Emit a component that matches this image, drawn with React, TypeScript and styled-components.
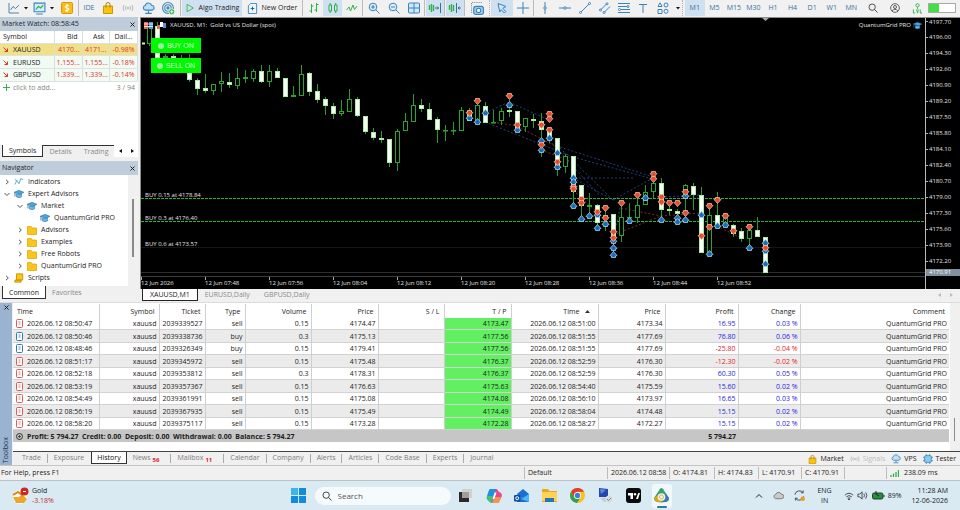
import React from "react";
import styled, { createGlobalStyle, css } from "styled-components";

const Global = createGlobalStyle`
  *, *::before, *::after { box-sizing: border-box; }
  html, body { margin: 0; padding: 0; background: #f0f0f0; }
  body { font: 7px/12px "Open Sans", "Noto Sans", sans-serif; color: #1c1c1c; overflow: hidden; }
  button { font: inherit; color: inherit; background: none; border: 0; padding: 0; margin: 0; cursor: default; white-space: nowrap; }
  svg { display: block; flex: none; }
`;

const Screen = styled.div`
  display: flex;
  flex-direction: column;
  min-height: 100vh;
`;

/* ---------- toolbar ---------- */

const Toolbar = styled.header`
  display: flex;
  align-items: center;
  height: 17px;
  padding: 0 4px 1px 6px;
  background: #f1f1f1;
  overflow: hidden;
`;

const Tool = styled.button<{ $w?: number; $on?: boolean; $wide?: boolean }>`
  display: flex;
  flex: none;
  align-items: center;
  justify-content: center;
  gap: 4px;
  width: ${(p) => p.$w ?? 20}px;
  height: 16px;
  color: ${(p) => (p.$wide ? "#1c1c1c" : "#34719f")};
  background: ${(p) => (p.$on ? "#cfe0f1" : "transparent")};
`;

const Divider = styled.i<{ $dotted?: boolean }>`
  flex: none;
  width: 1px;
  height: 16px;
  margin: 0 1px 0 0;
  border-left: 1px ${(p) => (p.$dotted ? "dotted #b5b5b5" : "solid #bdbdbd")};
`;

const Frames = styled.div`
  display: grid;
  grid-template-columns: repeat(9, 1fr);
  width: 176px;
  margin-left: 1px;
`;

const FrameButton = styled(Tool)`
  width: auto;
`;

const ToolbarEnd = styled.div`
  display: flex;
  align-items: center;
  margin-left: auto;
`;

const Level = styled.div`
  width: 28px;
  height: 10px;
  border: 1px solid #a9a9a9;
  background: linear-gradient(90deg, #3ee043 40%, #fff 40%);
`;

type IconProps = { size?: number; color?: string; children: React.ReactNode; box?: number; sw?: number };
const Icon = ({ size = 12, color = "#3b83bd", children, box = 12, sw = 1 }: IconProps) => (
  <svg width={size} height={size} viewBox={`0 0 ${box} ${box}`} fill="none" stroke={color} strokeWidth={sw} aria-hidden="true">
    {children}
  </svg>
);

const Caret = () => (
  <svg width="4" height="3" viewBox="0 0 4 3" aria-hidden="true"><path d="M0 0h4L2 2.6z" fill="#111" /></svg>
);

const GREEN = "#2eb34a";

const ShiftIcon = ({ back }: { back?: boolean }) => (
  <Icon size={14} box={14} color={GREEN}>
    <path d="M1.5 4v5M3.5 3v8M5.5 4v6" strokeWidth="1.4" />
    {back ? <path d="M8.5 2v10M13 7h-3M11.500 5.500 10 7l1.500 1.500" stroke="#3b6f95" /> : <path d="M12.500 2v10M7 7h3.500M9 5.500 10.500 7 9 8.500" stroke="#3b6f95" />}
  </Icon>
);

const BagIcon = ({ size = 12 }: { size?: number }) => (
  <Icon size={size} color="#c99700">
    <path d="M1.500 4h9v7.500h-9z" fill="#fbc40b" />
    <path d="M4 5.500V2.500a2 2 0 0 1 4 0v3" stroke="#a8811a" />
  </Icon>
);

const CloudIcon = ({ size = 13 }: { size?: number }) => (
  <Icon size={size} color="#3b83bd">
    <path d="M3 7.500a2.200 2.200 0 0 1 0-4.300 3 3 0 0 1 5.800-.2A2.300 2.300 0 0 1 9.500 7.500z" fill="#bfe0f7" />
    <path d="M6 7.500V10M3 10.500h6" />
  </Icon>
);

const SignalIcon = ({ size = 12 }: { size?: number }) => (
  <Icon size={size} color="#b9b9b9">
    <path d="M2 3Q0 6 2 9M4 4Q3 6 4 8M10 3Q12 6 10 9M8 4Q9 6 8 8" /><circle cx="6" cy="6" r=".7" fill="#b9b9b9" />
  </Icon>
);

const SearchIcon = ({ size = 10, color = "#333" }: { size?: number; color?: string }) => (
  <Icon size={size} color={color}><circle cx="5" cy="5" r="3.800" /><path d="m8 8 3.500 3.500" /></Icon>
);

const TopBar = () => (
  <Toolbar>
    <Tool $w={16} aria-label="Chart type"><Icon><path d="M1 1v10h10M2.500 8 5 4.500l2.500 2L11 3" stroke="#4a86a8" /></Icon></Tool>
    <Tool $w={8} aria-label="Chart type menu"><Caret /></Tool>
    <Tool $w={19} aria-label="Templates"><Icon size={13}><path d="M1 1h10v8H1zM3 11h6" fill="#d5ecfa" /><path d="m2.500 7 2.500-3 2 1.500L9.500 3" stroke={GREEN} /></Icon></Tool>
    <Tool $w={6} aria-label="Templates menu"><Caret /></Tool>
    <Tool $w={23} aria-label="Symbols"><Icon><rect x=".5" y=".5" width="11" height="11" rx="1" fill="#f8bd1c" stroke="#d99a00" /><path d="M8 4Q6 2.500 4.500 4T6 6t1.500 2.200T4 8.300M6 2v8" stroke="#fff" /></Icon></Tool>
    <Divider />
    <Tool $w={18}>IDE</Tool>
    <Tool aria-label="Market"><BagIcon /></Tool>
    <Tool aria-label="Signals"><SignalIcon /></Tool>
    <Tool aria-label="Virtual hosting"><CloudIcon /></Tool>
    <Tool aria-label="Copy trading">
      <Icon size={13}><circle cx="5.500" cy="5.500" r="5" /><circle cx="5.500" cy="5.500" r="3" /><circle cx="5.500" cy="5.500" r="1" fill="#3b83bd" /><circle cx="9" cy="9" r="2.700" fill={GREEN} stroke="#fff" strokeWidth=".6" /><path d="M9 7.500v3M7.500 9h3" stroke="#fff" strokeWidth=".8" /></Icon>
    </Tool>
    <Tool $w={2} aria-hidden="true" tabIndex={-1} />
    <Divider />
    <Tool $w={60} $on $wide><Icon size={10} color={GREEN}><path d="M2.500 1.500 10 6l-7.500 4.500z" /></Icon>Algo Trading</Tool>
    <Tool $w={60} $wide><Icon size={11}><path d="M4 .5h6.500v11h-9V3z" fill="#eaf5fd" /><path d="M6 4v4M4 6h4" stroke="#1c5b8d" /></Icon>New Order</Tool>
    <Divider />
    <Tool $w={19} aria-label="Bar chart"><Icon color={GREEN}><path d="M3.500 2v9M1.500 9h2M3.500 4h2M8.500 1v9M6.500 8h2M8.500 2.500h2" /></Icon></Tool>
    <Tool $w={19} $on aria-label="Candles"><Icon color={GREEN}><path d="M2 3h2.500v6H2zM7.500 3H10v6H7.500zM3.200 1v2M3.200 9v2M8.700 1v2M8.700 9v2" /></Icon></Tool>
    <Tool aria-label="Line chart"><Icon color={GREEN}><path d="M.5 8 3 5l1.500 4L7 3l1.500 4.500L11 4" /></Icon></Tool>
    <Divider />
    <Tool aria-label="Zoom in"><Icon><circle cx="5" cy="5" r="3.800" fill="#dceffb" /><path d="m8 8 3.500 3.500M5 3v4M3 5h4" /></Icon></Tool>
    <Tool aria-label="Zoom out"><Icon><circle cx="5" cy="5" r="3.800" fill="#dceffb" /><path d="m8 8 3.500 3.500M3 5h4" /></Icon></Tool>
    <Tool aria-label="Tile windows"><Icon><rect x=".5" y="1" width="11" height="10" rx="1" fill="#cfe8f9" /><path d="M6 1v10M.5 6h11" /></Icon></Tool>
    <Divider />
    <Tool $w={18} $on aria-label="Auto scroll"><ShiftIcon /></Tool>
    <Divider />
    <Tool $w={18} $on aria-label="Chart shift"><ShiftIcon back /></Tool>
    <Divider />
    <Tool $w={23} aria-label="Screenshot"><Icon size={13}><path d="M.5 10V.5H11" strokeDasharray="1 1" stroke="#888" /><rect x="2.500" y="4" width="9" height="7.500" rx="2" fill="#9ccbf0" /><circle cx="7" cy="7.800" r="2" fill="#fff" /></Icon></Tool>
    <Divider $dotted />
    <Tool $w={22} $on aria-label="Cursor"><Icon><path d="m2 1.500 8 3-3.200 1.700 3 3.300-1.500 1.500-3-3.300L3.800 10z" fill="#cfe8f9" /></Icon></Tool>
    <Tool aria-label="Crosshair"><Icon><path d="M6 0v12M0 6h12" /></Icon></Tool>
    <Divider />
    <Tool aria-label="Vertical line"><Icon><path d="M6 0v12" /><circle cx="6" cy="6" r="1.200" fill="#fff" /></Icon></Tool>
    <Tool aria-label="Horizontal line"><Icon><path d="M0 6h12" /><circle cx="6" cy="6" r="1.200" fill="#fff" /></Icon></Tool>
    <Tool aria-label="Trend line"><Icon><path d="M1.500 10.500 10.500 1.500" /><circle cx="1.500" cy="10.500" r="1" fill="#fff" /><circle cx="10.500" cy="1.500" r="1" fill="#fff" /></Icon></Tool>
    <Tool $w={19} aria-label="Channel"><Icon><path d="m1.500 8 6-6M5 10.500l6-6" /><circle cx="1.500" cy="8" r="1" fill="#fff" /><circle cx="8" cy="1.800" r="1" fill="#fff" /><circle cx="5" cy="10.500" r="1" fill="#fff" /></Icon></Tool>
    <Tool aria-label="Fibonacci"><Icon><path d="M0 1.500h12M0 4.500h9M3 7.500h9M0 10.500h12" /><circle cx="10" cy="4.500" r="1" fill="#fff" /><circle cx="1.500" cy="7.500" r="1" fill="#fff" /></Icon></Tool>
    <Tool $w={18} aria-label="Text"><Icon><path d="M2 2.500h8M6 2.500V11" /></Icon></Tool>
    <Tool $w={22} aria-label="Shapes"><Icon><path d="m3 .8 2 3.700H1zM1 7.500h4v4H1z" /><circle cx="9" cy="3" r="2" /><circle cx="9" cy="9.300" r="2" /></Icon></Tool>
    <Tool $w={8} aria-label="Shapes menu"><Caret /></Tool>
    <Divider $dotted />
    <Frames>
      {["M1", "M5", "M15", "M30", "H1", "H4", "D1", "W1", "MN"].map((f, i) => <FrameButton key={f} $on={i === 0}>{f}</FrameButton>)}
    </Frames>
    <ToolbarEnd>
      <Tool $w={22} aria-label="Search"><SearchIcon /></Tool>
      <Tool $w={22} aria-label="Account"><Icon size={10} color="#444"><circle cx="6" cy="6" r="5.200" /><circle cx="6" cy="4.800" r="1.800" /><path d="M2.500 9.500Q6 5.500 9.500 9.500" /></Icon></Tool>
      <Tool $w={22} aria-label="Level"><Icon color={GREEN} size={11}><circle cx="6" cy="2.500" r="1.800" /><path d="M6 4.500v2M1.500 7v4h2M5 7l1 4 1-4M9 7v4h2" /></Icon></Tool>
      <Level />
    </ToolbarEnd>
  </Toolbar>
);

/* ---------- left docks ---------- */

const Workspace = styled.main`
  display: flex;
  flex: 1;
  min-height: 284px;
`;

const Docks = styled.aside`
  display: flex;
  flex-direction: column;
  flex: none;
  width: 140px;
  padding-right: 2px;
  gap: 4px;
`;

const Dock = styled.section<{ $grow?: boolean }>`
  display: flex;
  flex-direction: column;
  flex: ${(p) => (p.$grow ? "1" : "none")};
  background: #fff;
`;

const DockTitle = styled.div`
  display: flex;
  align-items: center;
  justify-content: space-between;
  height: 14px;
  padding: 0 3px 0 2px;
  background: #bfcddb;
  color: #222;
`;

const CloseButton = ({ label }: { label: string }) => (
  <button aria-label={label}><Icon size={5} box={5} color="#222"><path d="m.5.5 4 4M4.500.5l-4 4" /></Icon></button>
);

const WatchTable = styled.table`
  width: 137px;
  height: 63px;
  border-collapse: collapse;
  table-layout: fixed;
  th, td { padding: 0 2px; height: 12px; line-height: 11px; font-weight: 400; text-align: right; white-space: nowrap; border-right: 1px solid #d9dfd9; border-bottom: 1px solid #dfe3df; }
  th:first-child, td:first-child { text-align: left; padding-left: 3px; }
  th { padding-right: 4px; }
`;

const WatchRow = styled.tr<{ $hot?: boolean }>`
  background: ${(p) => (p.$hot ? "#f1e08a" : "#f1fbf3")};
  color: #e0352b;
`;

const SymbolCell = styled.div<{ $muted?: boolean }>`
  display: flex;
  align-items: center;
  gap: ${(p) => (p.$muted ? 3 : 5)}px;
  color: ${(p) => (p.$muted ? "#858585" : "#222")};
`;

const AddRow = styled.tr`
  color: #808080;
  td { border: 0; }
`;

const MarketGap = styled.div`
  height: 51px;
`;

const DockTabs = styled.div`
  display: flex;
  height: 12px;
  background: #f0f0f0;
`;

const DockTab = styled.button<{ $on?: boolean }>`
  padding: 0 6px;
  margin-left: ${(p) => (p.$on ? 2 : 0)}px;
  line-height: 11px;
  color: ${(p) => (p.$on ? "#222" : "#8a8a8a")};
  border-top: 1px solid #333;
  ${(p) => p.$on && css`background: #fff; border: 1px solid #333; border-top: 0;`}
`;

const NavTabs = styled(DockTabs)`
  height: 16px;
  padding-bottom: 3px;
  ${DockTab} { border-top: 0; }
`;

const TabArrows = styled.div`
  display: flex;
  flex: 1;
  justify-content: space-around;
  align-items: center;
  background: #fff;
`;

const Tree = styled.ul`
  flex: 1;
  margin: 0;
  padding: 1px 0 0;
  list-style: none;
  height: 111px;
  border-right: 10px solid #f0f0f0;
  overflow: hidden;
`;

const TreeItem = styled.li<{ $depth: number }>`
  display: flex;
  align-items: center;
  gap: 4px;
  height: 12px;
  padding-left: ${(p) => 4 + p.$depth * 13}px;
  white-space: nowrap;
`;

const TreeWrap = styled.div`
  position: relative;
  display: flex;
  flex: 1;
`;

const TreeThumb = styled.i`
  position: absolute;
  top: 24px;
  right: 4px;
  width: 2px;
  height: 58px;
  background: #8b8b8b;
`;

const HatIcon = ({ size = 10 }: { size?: number }) => (
  <svg width={size} height={size} viewBox="0 0 12 12" aria-hidden="true">
    <path d="M0 4 6 1.500 12 4 7 6.500z" fill="#4aa5dc" stroke="#23689a" strokeWidth=".6" />
    <path d="M3 6v3.500q3 1.800 6 0V5.800L7 7z" fill="#66bbec" stroke="#23689a" strokeWidth=".6" /><path d="M1.200 4.500V9" stroke="#23689a" />
  </svg>
);
const FolderIcon = () => (
  <svg width="10" height="9" viewBox="0 0 10 9" aria-hidden="true"><path d="M.5.5h3.700l1 1.500h4.300v6.500h-9z" fill="#fbc519" stroke="#dba400" strokeWidth=".7" /></svg>
);
const WaveIcon = () => <Icon size={10} color="#3aa5b8"><path d="M1 9 3.500 4 6 8l2-6 3 1M1 3l2 1" /></Icon>;
const ScriptIcon = () => <Icon size={10} color="#c48f00"><path d="M3 1h7.500v7.500H3zM1 8.500h7.500V11H1z" fill="#fbc519" /></Icon>;

const Twist = ({ open, none }: { open?: boolean; none?: boolean }) => (
  <Icon size={6} box={6} color={none ? "transparent" : "#444"}><path d={open ? "m.5 2 2.500 2.500L5.500 2" : "M2 .8 4.300 3 2 5.200"} strokeWidth=".9" /></Icon>
);

type Kind = "wave" | "hat" | "folder" | "script";
const tree: { d: number; k: Kind; t: string; open?: boolean; leaf?: boolean }[] = [
  { d: 0, k: "wave", t: "Indicators" },
  { d: 0, k: "hat", t: "Expert Advisors", open: true },
  { d: 1, k: "hat", t: "Market", open: true },
  { d: 2, k: "hat", t: "QuantumGrid PRO", leaf: true },
  { d: 1, k: "folder", t: "Advisors" },
  { d: 1, k: "folder", t: "Examples" },
  { d: 1, k: "folder", t: "Free Robots" },
  { d: 1, k: "folder", t: "QuantumGrid PRO" },
  { d: 0, k: "script", t: "Scripts" },
];
const kinds: Record<Kind, React.ReactNode> = { wave: <WaveIcon />, hat: <HatIcon />, folder: <FolderIcon />, script: <ScriptIcon /> };

const quotes = [
  ["XAUUSD", "4170...", "4171...", "-0.98%"],
  ["EURUSD", "1.155...", "1.155...", "-0.18%"],
  ["GBPUSD", "1.339...", "1.339...", "-0.14%"],
];

const LeftDocks = () => (
  <Docks>
    <Dock>
      <DockTitle>Market Watch: 08:58:45<CloseButton label="Close Market Watch" /></DockTitle>
      <WatchTable>
        <colgroup><col width="54" /><col width="28" /><col width="27" /><col width="28" /></colgroup>
        <thead><tr><th>Symbol</th><th>Bid</th><th>Ask</th><th>Dail...</th></tr></thead>
        <tbody>
          {quotes.map(([s, b, a, d], i) => (
            <WatchRow key={s} $hot={i === 0}>
              <td><SymbolCell><Icon size={5} box={5} color="#e0352b"><path d="m.5.5 4 4M4.500 1.500v3h-3" /></Icon>{s}</SymbolCell></td>
              <td>{b}</td><td>{a}</td><td>{d}</td>
            </WatchRow>
          ))}
          <AddRow><td colSpan={3}><SymbolCell $muted><Icon size={7} box={7} color={GREEN}><path d="M3.500 0v7M0 3.500h7" /></Icon>click to add...</SymbolCell></td><td>3 / 94</td></AddRow>
        </tbody>
      </WatchTable>
      <MarketGap />
      <DockTabs>
        <DockTab $on>Symbols</DockTab><DockTab>Details</DockTab><DockTab>Trading</DockTab>
        <TabArrows>
          <button aria-label="Scroll tabs left"><svg width="3" height="4"><path d="M3 0v4L0 2z" fill="#111" /></svg></button>
          <button aria-label="Scroll tabs right"><svg width="3" height="4"><path d="M0 0v4l3-2z" fill="#111" /></svg></button>
        </TabArrows>
      </DockTabs>
    </Dock>
    <Dock $grow>
      <DockTitle>Navigator<CloseButton label="Close Navigator" /></DockTitle>
      <TreeWrap>
        <Tree>
          {tree.map((n, i) => (
            <TreeItem key={i} $depth={n.d}><Twist open={n.open} none={n.leaf} />{kinds[n.k]}{n.t}</TreeItem>
          ))}
        </Tree>
        <TreeThumb />
      </TreeWrap>
      <NavTabs><DockTab $on>Common</DockTab><DockTab>Favorites</DockTab></NavTabs>
    </Dock>
  </Docks>
);

/* ---------- chart ---------- */

const ChartColumn = styled.section`
  display: flex;
  flex-direction: column;
  flex: 1;
  min-width: 0;
`;

const ChartFrame = styled.div`
  display: flex;
  flex: 1;
  border: solid #8d8d8d;
  border-width: 1px 0 0 1px;
  background: #000;
  color: #e4e4e4;
  font-size: 6px;
  overflow: hidden;
`;

const PlotColumn = styled.div`
  position: relative;
  display: flex;
  flex-direction: column;
  flex: 1;
  min-width: 0;
  border-right: 1px solid #b9b9b9;
`;

const Plot = styled.svg`
  width: 100%;
  height: 258px;
`;

const TimeAxis = styled.div`
  display: flex;
  flex: 1;
  border-top: 1px solid #3c3c3c;
  overflow: hidden;
  span { flex: none; width: 64px; white-space: nowrap; background: linear-gradient(#aaa, #aaa) left top / 1px 3px no-repeat; }
`;

const PriceAxis = styled.div`
  width: 34px;
  div { display: flex; align-items: center; gap: 1px; height: 16px; line-height: 8px; }
  div::before { content: ""; width: 2px; height: 1px; background: #aaa; }
  div:first-child { height: 7px; margin-bottom: 4px; }
`;

const LastPrice = styled.b`
  display: block;
  height: 7px;
  padding-left: 3px;
  font-weight: 400;
  line-height: 7px;
  background: #8090a0;
  color: #fff;
`;

const ChartTitle = styled.div`
  position: absolute;
  top: 1px;
  left: 3px;
  right: 3px;
  display: flex;
  align-items: center;
  gap: 4px;
`;

const Advisor = styled.span`
  display: flex;
  align-items: center;
  gap: 2px;
  margin-left: auto;
`;

const TradeButtons = styled.div`
  position: absolute;
  top: 20px;
  left: 10px;
  display: grid;
  gap: 5px;
`;

const TradeButton = styled.button`
  display: flex;
  align-items: center;
  justify-content: center;
  gap: 3px;
  width: 50px;
  height: 15px;
  background: #00f800;
  color: #d4ffd4;
  font: 7px/14px "Liberation Sans", sans-serif;
  &::before { content: ""; width: 6px; height: 6px; border-radius: 50%; background: #9ceaa0; }
`;

const PLOT_LEFT = 141;
const PLOT_TOP = 18;
const FIRST_X = 149;
const STEP = 8;

/* high, body top, body bottom, low, falling */
const candles: [number, number, number, number, 0 | 1][] = [
  [26, 27, 44, 46, 0], [22, 26, 58, 58, 1], [54, 56, 58, 60, 0], [54, 56, 64, 66, 1], [55, 62, 72, 72, 1],
  [54, 68, 80, 82, 1], [78, 80, 89, 95, 1], [74, 88, 91, 93, 1], [84, 84, 91, 95, 0], [72, 81, 84, 92, 0],
  [73, 82, 85, 88, 1], [68, 78, 86, 89, 0], [70, 77, 79, 83, 0], [69, 71, 79, 82, 0], [65, 71, 82, 83, 1],
  [65, 71, 82, 87, 0], [68, 71, 78, 78, 1], [78, 78, 97, 97, 1], [86, 95, 97, 97, 0], [65, 74, 96, 96, 0],
  [72, 73, 92, 96, 1], [84, 91, 100, 103, 1], [97, 99, 106, 115, 1], [103, 106, 114, 119, 1], [100, 111, 114, 116, 0],
  [89, 99, 112, 112, 0], [97, 99, 116, 117, 1], [116, 116, 132, 134, 1], [128, 132, 138, 140, 1], [131, 138, 140, 143, 1],
  [139, 139, 163, 167, 1], [129, 131, 163, 171, 0], [113, 121, 131, 131, 0], [94, 105, 122, 122, 0], [99, 105, 109, 112, 1],
  [103, 109, 120, 120, 1], [117, 119, 130, 143, 1], [125, 130, 131, 141, 0], [122, 130, 131, 135, 0], [107, 110, 131, 131, 0],
  [108, 111, 121, 121, 1], [102, 105, 122, 122, 0], [102, 106, 123, 123, 1], [110, 122, 123, 123, 0], [108, 111, 121, 125, 0],
  [100, 110, 112, 117, 1], [111, 111, 130, 130, 1], [118, 118, 127, 132, 0], [114, 119, 121, 128, 1], [113, 121, 130, 157, 1],
  [128, 130, 139, 143, 1], [138, 138, 167, 176, 1], [154, 156, 167, 173, 0], [156, 156, 192, 205, 1], [185, 185, 206, 218, 1],
  [193, 205, 207, 217, 0], [204, 205, 223, 228, 1], [207, 215, 219, 231, 0], [214, 214, 240, 256, 1], [202, 217, 236, 242, 0],
  [203, 217, 218, 223, 0], [193, 205, 218, 223, 0], [185, 192, 205, 205, 0], [175, 183, 192, 198, 0], [178, 183, 210, 220, 1],
  [203, 209, 211, 215, 1], [209, 211, 214, 220, 1], [184, 185, 197, 220, 0], [183, 186, 195, 210, 1], [187, 195, 253, 253, 1],
  [206, 215, 253, 256, 0], [192, 215, 226, 228, 1], [213, 216, 224, 226, 0], [224, 225, 234, 237, 1], [228, 231, 239, 242, 1],
  [225, 230, 239, 247, 0], [217, 230, 237, 237, 1], [237, 237, 273, 273, 1],
];

/* x, then sell arrows, then buy arrows */
const deals: [number, number[], number[]][] = [
  [469, [113], [118]], [477, [101], [122]], [485, [], [113]], [509, [96], [105]], [517, [125], [130]],
  [541, [125, 145], [141, 150]], [549, [114, 119, 130], [138]], [557, [162], [153, 167]],
  [573, [187, 189], [178, 182, 206]], [581, [199, 203], [219]], [589, [], [216]], [597, [212], [215, 228]],
  [605, [208, 218], [224]], [613, [232, 238], [241, 248, 255]], [621, [203], []], [629, [], [221]],
  [637, [195], []], [645, [], [198]], [653, [174, 179], []], [661, [197, 202], [220]], [669, [203], []],
  [677, [203], [218, 222]], [685, [192, 213], [196, 220]], [701, [236], [215]], [709, [206, 227], [254]],
  [717, [200], [226]], [725, [216], [225]], [733, [231], []], [749, [227], [248]], [765, [248], [243, 251, 264]],
];

const links: [number, number, number, number, "b" | "r"][] = [
  [485, 113, 509, 102, "b"], [509, 102, 549, 120, "b"], [485, 122, 573, 157, "b"], [560, 147, 653, 177, "b"],
  [557, 145, 613, 200, "b"], [573, 157, 653, 179, "b"], [575, 178, 634, 178, "b"], [573, 178, 613, 200, "b"], [613, 200, 653, 178, "b"],
  [549, 140, 600, 196, "b"], [661, 197, 701, 195, "b"], [613, 241, 621, 203, "b"],
  [493, 122, 517, 126, "r"], [517, 126, 557, 147, "r"], [621, 208, 661, 216, "r"], [613, 235, 661, 216, "r"],
  [661, 216, 701, 213, "r"], [541, 150, 573, 162, "r"], [573, 190, 597, 212, "r"], [717, 226, 741, 238, "r"],
];

const orders: [number, string][] = [[198, "BUY 0.15 at 4178.84"], [221, "BUY 0.3 at 4176.40"], [247, "BUY 0.6 at 4173.57"]];

const Arrow = ({ x, y, sell }: { x: number; y: number; sell?: boolean }) => (
  <path
    transform={`translate(${x} ${y}) scale(1 ${sell ? -1 : 1})`}
    d="M0-3.500 3.500.5 2 1v1.500h-4V1L-3.500.5z"
    fill={sell ? "#e2502f" : "#1b6db3"}
    stroke={sell ? "#f5b5a2" : "#a9d0ee"}
    strokeWidth=".8"
  />
);

const prices = ["4197.70", "4196.00", "4194.30", "4192.60", "4190.90", "4189.20", "4187.50", "4185.80", "4184.10", "4182.40", "4180.70", "4179.00", "4177.30", "4175.60", "4173.90", "4172.20"];
const times = ["2026", "07:48", "07:56", "08:04", "08:12", "08:20", "08:28", "08:36", "08:44", "08:52"];

const ChartTabs = styled.div`
  display: flex;
  align-items: flex-start;
  height: 13px;
  background: #f0f0f0;
`;

const ChartTab = styled.button<{ $on?: boolean }>`
  height: 12px;
  padding: 0 7px;
  margin-left: ${(p) => (p.$on ? 2 : 0)}px;
  line-height: 12px;
  color: ${(p) => (p.$on ? "#222" : "#8a8a8a")};
  ${(p) => p.$on && css`background: #fff; border: 1px solid #222; border-top: 0;`}
`;

const ChartArrows = styled.div`
  display: flex;
  gap: 9px;
  margin: 4px 7px 0 auto;
`;

const Chart = () => (
  <ChartColumn>
    <ChartFrame>
      <PlotColumn>
        <Plot role="img" aria-label="XAUUSD M1 candles">
          <g transform={`translate(${-PLOT_LEFT} ${-PLOT_TOP})`}>
            <path d="M762 18h7l-3.500 3z" fill="#9aa8b4" />
            {orders.map(([y], i) => (
              <path key={y} d={`M141 ${y + 0.5}H2000`} stroke={i < 2 ? "#2fb337" : "#161616"} strokeDasharray={i < 2 ? "3 1" : undefined} />
            ))}
            <path d="M141 272.500H2000" stroke="#2a2f34" />
            <path d="M142 43.500h3" stroke="#c8ff9a" strokeWidth="2" />
            {links.map(([x1, y1, x2, y2, c], i) => (
              <path key={i} d={`M${x1} ${y1}L${x2} ${y2}`} stroke={c === "b" ? "#24549a" : "#a03c2a"} strokeWidth=".8" strokeDasharray="2 2" />
            ))}
            {candles.map(([h, t, b, l, down], i) => {
              const x = FIRST_X + i * STEP;
              return (
                <g key={i}>
                  <path d={`M${x + 0.5} ${h}V${l}`} stroke="#289a2e" />
                  <rect x={x - 1.5} y={t + 0.5} width="4" height={Math.max(b - t - 1, 0.5)} fill={down ? "#fff" : "#000"} stroke={down ? "#a4f09c" : "#2aa52e"} />
                </g>
              );
            })}
            {deals.map(([x, sells, buys]) => (
              <g key={x}>
                {buys.map((y) => <Arrow key={y} x={x + 0.5} y={y} />)}
                {sells.map((y) => <Arrow key={y} x={x + 0.5} y={y} sell />)}
              </g>
            ))}
            {orders.map(([y, t]) => <text key={t} x="145" y={y - 1} fill="#e4e4e4" fontSize="6">{t}</text>)}
          </g>
        </Plot>
        <TimeAxis>{times.map((t) => <span key={t}>12 Jun {t}</span>)}</TimeAxis>
        <ChartTitle>
          <svg width="9" height="7" viewBox="0 0 9 7"><path d="M0 0h4v7H0z" fill="#e86a5a" /><path d="M5 0h4v7H5z" fill="#5d93d8" /><path d="M0 2h9M0 4.500h9" stroke="#fff" strokeWidth=".8" /></svg>
          <svg width="9" height="7" viewBox="0 0 9 7"><path d="M0 3h3v4H0z" fill="#e86a5a" /><path d="M3 0h3v5H3z" fill="#fff" /><path d="M6 1h3v5H6z" fill="#5d93d8" /></svg>
          <span>XAUUSD, M1:&nbsp; Gold vs US Dollar (spot)</span>
          <Advisor>QuantumGrid PRO<HatIcon size={9} /></Advisor>
        </ChartTitle>
        <TradeButtons><TradeButton>BUY ON</TradeButton><TradeButton>SELL ON</TradeButton></TradeButtons>
      </PlotColumn>
      <PriceAxis>
        {prices.map((p) => <div key={p}>{p}</div>)}
        <LastPrice>4170.91</LastPrice>
      </PriceAxis>
    </ChartFrame>
    <ChartTabs>
      <ChartTab $on>XAUUSD,M1</ChartTab><ChartTab>EURUSD,Daily</ChartTab><ChartTab>GBPUSD,Daily</ChartTab>
      <ChartArrows>
        <svg width="3" height="4"><path d="M3 0v4L0 2z" fill="#bbb" /></svg><svg width="3" height="4"><path d="M0 0v4l3-2z" fill="#bbb" /></svg>
      </ChartArrows>
    </ChartTabs>
  </ChartColumn>
);

/* ---------- toolbox ---------- */

const Toolbox = styled.section`
  display: flex;
  height: 163px;
  border-top: 1px solid #dcdcdc;
`;

const Spine = styled.div`
  display: flex;
  flex-direction: column;
  align-items: center;
  justify-content: space-between;
  flex: none;
  width: 12px;
  margin-right: 1px;
  padding: 2px 0;
  background: #9ab3d1;
  span { writing-mode: vertical-rl; transform: rotate(180deg); line-height: 10px; color: #24354a; }
`;

const ToolboxBody = styled.div`
  display: flex;
  flex-direction: column;
  flex: 1;
  min-width: 0;
`;

const HistoryArea = styled.div`
  position: relative;
  flex: 1;
  padding: 1px 11px 0 0;
  background: linear-gradient(270deg, #f0f0f0 10px, #fff 10px);
`;

const HistoryThumb = styled.i`
  position: absolute;
  right: 5px;
  bottom: 10px;
  width: 1px;
  height: 23px;
  background: #8b8b8b;
`;

const History = styled.table`
  width: 100%;
  height: 138px;
  border-collapse: collapse;
  table-layout: fixed;
  th, td { padding: 0 2px; line-height: 11px; font-weight: 400; text-align: right; white-space: nowrap; border-right: 1px solid #cfcfcf; }
  th { height: 14px; padding-right: 4px; }
  th:first-child { text-align: left; padding-left: 4px; }
  th:last-child, td:last-child { border-right: 0; }
`;

const HistoryRow = styled.tr<{ $alt: boolean; $loss: boolean }>`
  background: ${(p) => (p.$alt ? "#ebebeb" : "#fff")};
  border-bottom: 1px solid #d2d2d2;
  td:nth-child(8) { background: #62ef62; }
  td:nth-child(11), td:nth-child(12) { color: ${(p) => (p.$loss ? "#e8202a" : "#2a22e0")}; }
`;

const HistoryCell = styled.div`
  display: flex;
  align-items: center;
  gap: 4px;
  padding-left: 1px;
`;

const SumRow = styled.tr`
  background: #c6c6c6;
  && td { border: 0; font-weight: 700; }
`;

const SortMark = styled.svg`
  display: inline;
  vertical-align: middle;
`;

const DocIcon = ({ color }: { color: string }) => (
  <svg width="7" height="9" viewBox="0 0 7 9" fill="none" stroke={color}><rect x=".5" y=".5" width="6" height="8" rx="1" fill="#fff" /><path d="M2.500 3h2M2.500 5h2" strokeWidth=".8" /></svg>
);

const rows: string[][] = [
  ["2026.06.12 08:50:47", "2039339527", "sell", "0.15", "4174.47", "4173.47", "2026.06.12 08:51:00", "4173.34", "16.95", "0.03 %"],
  ["2026.06.12 08:50:46", "2039338736", "buy", "0.3", "4175.13", "4177.56", "2026.06.12 08:51:55", "4177.69", "76.80", "0.06 %"],
  ["2026.06.12 08:48:46", "2039326349", "buy", "0.15", "4179.41", "4177.56", "2026.06.12 08:51:55", "4177.69", "-25.80", "-0.04 %"],
  ["2026.06.12 08:51:17", "2039345972", "sell", "0.15", "4175.48", "4176.37", "2026.06.12 08:52:59", "4176.30", "-12.30", "-0.02 %"],
  ["2026.06.12 08:52:18", "2039353812", "sell", "0.3", "4178.31", "4176.37", "2026.06.12 08:52:59", "4176.30", "60.30", "0.05 %"],
  ["2026.06.12 08:53:19", "2039357367", "sell", "0.15", "4176.63", "4175.63", "2026.06.12 08:54:40", "4175.59", "15.60", "0.02 %"],
  ["2026.06.12 08:54:49", "2039361991", "sell", "0.15", "4175.08", "4174.08", "2026.06.12 08:56:10", "4173.97", "16.65", "0.03 %"],
  ["2026.06.12 08:56:19", "2039367935", "sell", "0.15", "4175.49", "4174.49", "2026.06.12 08:58:04", "4174.48", "15.15", "0.02 %"],
  ["2026.06.12 08:58:20", "2039375117", "sell", "0.15", "4173.28", "4172.28", "2026.06.12 08:58:27", "4172.27", "15.15", "0.02 %"],
];
const widths = [86, 60, 46, 40, 66, 67, 66, 67, 87, 67, 73, 62];
const heads = ["Time", "Symbol", "Ticket", "Type", "Volume", "Price", "S / L", "T / P"];

const ToolTabs = styled.div`
  display: flex;
  align-items: flex-start;
  height: 14px;
  padding-left: 3px;
  border-top: 1px solid #444;
  background: #f0f0f0;
`;

const ToolTab = styled.button<{ $on?: boolean; $line?: boolean }>`
  height: 12px;
  line-height: 12px;
  padding: 0 7px 0 6px;
  color: ${(p) => (p.$on ? "#111" : "#7d7d7d")};
  ${(p) => p.$line && css`background: linear-gradient(#aaa, #aaa) right center / 1px 9px no-repeat;`}
  ${(p) => p.$on && css`padding: 0 5px; background: #fff; border: 1px solid #333; border-top: 0; color: #111;`}
  b { color: #e0202c; font-size: 6px; margin: 0 5px 0 2px; vertical-align: -2px; line-height: 6px; }
`;

const Services = styled.div`
  display: flex;
  gap: 6px;
  margin: 1px 4px 0 auto;
`;

const Service = styled.button<{ $off?: boolean }>`
  display: flex;
  align-items: center;
  gap: 3px;
  color: ${(p) => (p.$off ? "#bdbdbd" : "#222")};
`;

const StatusBar = styled.footer`
  display: flex;
  align-items: center;
  height: 15px;
  border-top: 1px solid #c4c4c4;
  background: #f0f0f0;
`;

const StatusCell = styled.span<{ $w?: number; $first?: boolean }>`
  display: flex;
  align-items: center;
  gap: 5px;
  flex: ${(p) => (p.$w ? "none" : "1")};
  width: ${(p) => (p.$w ? `${p.$w}px` : "auto")};
  height: 12px;
  padding-left: ${(p) => (p.$first ? 1 : 3)}px;
  border-left: ${(p) => (p.$first ? "0" : "1px solid #bcbcbc")};
  white-space: nowrap;
`;

const toolTabs: [string, string?][] = [["Trade"], ["Exposure"], ["History"], ["News", "56"], ["Mailbox", "11"], ["Calendar"], ["Company"], ["Alerts"], ["Articles"], ["Code Base"], ["Experts"], ["Journal"]];

const ToolboxPanel = () => (
  <Toolbox>
    <Spine><CloseButton label="Close Toolbox" /><span>Toolbox</span></Spine>
    <ToolboxBody>
      <HistoryArea>
        <History>
          <colgroup>{widths.map((w, i) => <col key={i} width={w} />)}<col /></colgroup>
          <thead>
            <tr>
              {heads.map((h) => <th key={h}>{h}</th>)}
              <th>Time &nbsp; <SortMark width="5" height="3"><path d="M0 3h5L2.500 0z" fill="#333" /></SortMark> &nbsp;</th>
              <th>Price</th><th>Profit</th><th>Change</th><th>Comment</th>
            </tr>
          </thead>
          <tbody>
            {rows.map(([open, ticket, type, vol, price, tp, close, cprice, profit, change], i) => (
              <HistoryRow key={ticket} $alt={i % 2 === 1} $loss={profit.startsWith("-")}>
                <td><HistoryCell><DocIcon color={type === "buy" ? "#2d7ab0" : "#dd5c58"} />{open}</HistoryCell></td>
                <td>xauusd</td><td>{ticket}</td><td>{type}</td><td>{vol}</td><td>{price}</td><td />
                <td>{tp}</td><td>{close}</td><td>{cprice}</td><td>{profit}</td><td>{change}</td><td>QuantumGrid PRO</td>
              </HistoryRow>
            ))}
            <SumRow>
              <td colSpan={10}>
                <HistoryCell>
                  <Icon size={7} box={7} color="#333"><circle cx="3.500" cy="3.500" r="3" /><path d="M3.500 2v3M2 3.500h3" strokeWidth=".8" /></Icon>
                  Profit: 5 794.27&nbsp; Credit: 0.00&nbsp; Deposit: 0.00&nbsp; Withdrawal: 0.00&nbsp; Balance: 5 794.27
                </HistoryCell>
              </td>
              <td>5 794.27</td><td /><td />
            </SumRow>
          </tbody>
        </History>
        <HistoryThumb />
      </HistoryArea>
      <ToolTabs>
        {toolTabs.map(([t, n], i) => (
          <ToolTab key={t} $on={t === "History"} $line={i !== 1 && i !== 2 && i !== 11}>{t}{n && <b>{n}</b>}</ToolTab>
        ))}
        <Services>
          <Service><BagIcon size={9} />Market</Service>
          <Service $off><SignalIcon size={10} />Signals</Service>
          <Service><CloudIcon size={10} />VPS</Service>
          <Service><Icon size={10}><rect x="2" y="2" width="8" height="8" rx="1" fill="#8ecbf2" /><path d="M4 0v2M8 0v2M4 10v2M8 10v2M0 4h2M0 8h2M10 4h2M10 8h2" /></Icon>Tester</Service>
        </Services>
      </ToolTabs>
    </ToolboxBody>
  </Toolbox>
);

/* ---------- taskbar ---------- */

const Taskbar = styled.nav`
  display: grid;
  grid-template-columns: 1fr auto 1fr;
  align-items: center;
  height: 30px;
  padding: 0 12px;
  border-top: 1px solid #b9c2c9;
  background: #d9eaf3;
  line-height: 10px;
`;

const Weather = styled.button`
  display: flex;
  gap: 3px;
  align-items: center;
  text-align: left;
  line-height: 10px;
  em { display: block; color: #c02f2a; font-style: normal; }
`;

const Apps = styled.div`
  display: flex;
  align-items: center;
  gap: 8px;
`;

const AppButton = styled.button<{ $on?: boolean }>`
  position: relative;
  display: grid;
  place-items: center;
  width: 20px;
  height: 24px;
  ${(p) => p.$on && css`
    background: #f1f8fb;
    border-radius: 3px;
    &::after { content: ""; position: absolute; left: 5px; right: 5px; bottom: 0; height: 2px; border-radius: 1px; background: #2c7f96; }
  `}
`;

const SearchBox = styled.label`
  display: flex;
  align-items: center;
  gap: 6px;
  width: 136px;
  height: 18px;
  padding: 0 7px;
  border-radius: 9px;
  background: #f5fafd;
  margin: 0 -3px 0 -2px;
  input { flex: 1; min-width: 0; border: 0; padding: 0; background: none; font: 8px/12px "Open Sans", sans-serif; outline: 0; }
  input::placeholder { color: #555; opacity: 1; }
`;

const Tray = styled.div`
  display: flex;
  align-items: center;
  justify-content: flex-end;
  gap: 10px;
`;

const Status = styled.div`
  display: flex;
  align-items: center;
  gap: 3px;
`;

const Lang = styled.div`
  text-align: center;
  margin: 0 2px;
`;

const Clock = styled.time`
  text-align: right;
  white-space: nowrap;
`;

const TaskbarPanel = () => (
  <Taskbar>
    <Weather>
      <svg width="17" height="18" viewBox="0 0 17 18"><circle cx="8" cy="10" r="7" fill="#fff" /><path d="M1 10h6l1-1h4l3 3-3 4H4z" fill="#f0a52a" /><path d="m1 8 5-3 5 4" stroke="#d98514" strokeWidth="2" fill="none" /><circle cx="12.500" cy="4.500" r="4" fill="#c92a20" /><path d="M11 4.500h3" stroke="#fff" /></svg>
      <span>Gold<em>-3.18%</em></span>
    </Weather>
    <Apps>
      <AppButton aria-label="Start"><svg width="15" height="15" viewBox="0 0 15 15"><path d="M0 0h7v7H0zM8 0h7v7H8zM0 8h7v7H0zM8 8h7v7H8z" fill="#128bdb" /><path d="M0 0h7v7H0z" fill="#3bb5ee" /></svg></AppButton>
      <SearchBox><SearchIcon size={10} color="#222" /><input placeholder="Search" aria-label="Search" /></SearchBox>
      <AppButton aria-label="Task view"><svg width="13" height="13" viewBox="0 0 13 13"><path d="M0 3h10v10H0z" fill="#2b2b2b" /><path d="M3 0h10v9H3z" fill="#d4d1cd" /><path d="M3 3h7v6H3z" fill="#a09e9c" /></svg></AppButton>
      <AppButton aria-label="Copilot"><svg width="16" height="16" viewBox="0 0 16 16"><path d="M4 1h6q1 0 1.500 2L10 5 7 13q-.5 2-2 2L2 12q-2-1-1-4l2-6z" fill="#2290e0" /><path d="M1 8h6l-1 5q-.5 2-2 1-3-1-3-6z" fill="#49c06a" /><path d="M10 1q2 0 2.500 2.500L15 5q1.500 2 .5 4l-2 4q-.5 2-2.500 2H6l3-9z" fill="#e8488b" /><path d="m7 13 1.500-4h7l-2 4q-.5 2-2.500 2H6z" fill="#f6934b" /><path d="m8.500 4.500-2 7 2-1 2-6z" fill="#fff" /></svg></AppButton>
      <AppButton aria-label="Outlook"><svg width="15" height="14" viewBox="0 0 15 14"><path d="M3 5 9 0l6 5v8H3z" fill="#1b6fd4" /><path d="m15 5-8 5 8 3z" fill="#53b4f3" /><path d="m3 5 6 4-6 4z" fill="#2e8ce6" /><rect y="6" width="6.500" height="6.500" rx="1" fill="#0f4fa3" /><circle cx="3.200" cy="9.200" r="1.500" fill="none" stroke="#fff" /></svg></AppButton>
      <AppButton aria-label="Explorer"><svg width="15" height="13" viewBox="0 0 15 13"><path d="M0 0h6l1.500 2H15v11H0z" fill="#e9a91d" /><path d="M0 3h15v9H0z" fill="#fdd257" /><path d="M3 9h9v4H3z" fill="#2377b5" /></svg></AppButton>
      <AppButton aria-label="Chrome"><svg width="15" height="15" viewBox="0 0 15 15"><circle cx="7.500" cy="7.500" r="7.500" fill="#f8c31c" /><path d="M1 3.800A7.500 7.500 0 0 1 14 3.800H7.500L4.300 9.400z" fill="#e03e2f" /><path d="M1 3.800a7.500 7.500 0 0 0 6 11.200l3.700-5.700-6.400.1z" fill="#2da14c" /><circle cx="7.500" cy="7.500" r="3.500" fill="#fff" /><circle cx="7.500" cy="7.500" r="2.700" fill="#3a7de8" /></svg></AppButton>
      <AppButton aria-label="Remote desktop"><svg width="15" height="15" viewBox="0 0 15 15"><path d="m1 0 9 1v8L1 9z" fill="#2547a8" /><path d="m2 1 6 .7L3 6z" fill="#5d8ee5" /><path d="m2 10 8-1 3 3-7 2z" fill="#c4ccd4" /><circle cx="11" cy="11" r="3.500" fill="#d6dcdf" /><path d="m9 11 1.500 1.500L13 10" stroke="#6a9a6d" fill="none" /></svg></AppButton>
      <AppButton aria-label="TradingView"><svg width="15" height="15" viewBox="0 0 15 15"><rect width="15" height="15" rx="3" fill="#0b0b0b" /><path d="M2 5h5v6H4.500V7.500H2zM10 11l2.200-6H14l-2 6z" fill="#fff" /><circle cx="9" cy="6.200" r="1.200" fill="#fff" /></svg></AppButton>
      <AppButton $on aria-label="MetaTrader"><svg width="15" height="15" viewBox="0 0 15 15"><path d="M7.500 0q2 0 2.500 2.500L15 10q0 4-4 4l-3.500.5L4 14q-4 0-4-4l5-7.500Q5.500 0 7.500 0z" fill="#3a9c78" /><path d="M0 10q1 5 7 4l3-3-6-4z" fill="#e0a31f" /><path d="M15 10q0 4-5 4l-1-4 3-4z" fill="#3d79b8" /><circle cx="7.500" cy="9" r="3.800" fill="#f6f2dc" /><circle cx="7.500" cy="9" r="2" fill="none" stroke="#c8b878" /></svg></AppButton>
    </Apps>
    <Tray>
      <Icon size={8} box={8} color="#222"><path d="m1 5.500 3-3 3 3" /></Icon>
      <Icon size={11} color="#777"><path d="M3 9.500a2.400 2.400 0 0 1 0-4.700 3.200 3.200 0 0 1 6-.3 2.500 2.500 0 0 1 .3 5z" fill="#c9c9c9" /></Icon>
      <Icon size={11} color="#444"><path d="M1 5a5 5 0 0 1 9-2M10 .5V3H7.500M10.500 7a5 5 0 0 1-9 2M1.500 11.500V9H4" /><circle cx="9.500" cy="9.500" r="2.500" fill="#f39a1d" stroke="none" /></Icon>
      <Lang>ENG<br />IN</Lang>
      <Status>
        <Icon size={10} color="#333"><path d="M1 5q5-4.500 10 0M2.700 7q3.300-3 6.600 0M4.400 8.800q1.600-1.300 3.200 0" /><circle cx="6" cy="10" r=".6" fill="#333" /></Icon>
        <Icon size={11} color="#333"><path d="M1 4.500h2L5.500 2v8L3 7.500H1zM7.500 4q1.300 2 0 4M9.500 2.500q2.300 3.500 0 7" strokeWidth=".9" /></Icon>
        <svg width="14" height="9" viewBox="0 0 14 9"><rect x="1.500" y="2" width="10.500" height="6" rx="1.500" fill="#1d9436" stroke="#333" /><path d="M13 4v2" stroke="#333" /><path d="M5 0v3l3 2" stroke="#222" fill="none" /></svg>
        89%
      </Status>
      <Clock>11:28 AM<br />12-06-2026</Clock>
    </Tray>
  </Taskbar>
);

export default function App() {
  return (
    <Screen>
      <Global />
      <TopBar />
      <Workspace>
        <LeftDocks />
        <Chart />
      </Workspace>
      <ToolboxPanel />
      <StatusBar>
        <StatusCell $first>For Help, press F1</StatusCell>
        <StatusCell $w={83}>Default</StatusCell>
        <StatusCell $w={62}>2026.06.12 08:58</StatusCell>
        <StatusCell $w={45}>O: 4174.81</StatusCell>
        <StatusCell $w={44}>H: 4174.83</StatusCell>
        <StatusCell $w={43}>L: 4170.91</StatusCell>
        <StatusCell $w={43}>C: 4170.91</StatusCell>
        <StatusCell $w={42} />
        <StatusCell $w={74}><svg width="9" height="7"><path d="M1 7V5M3.500 7V3.500M6 7V2M8.500 7V0" stroke="#2eb34a" strokeWidth="1.300" /></svg>238.09 ms</StatusCell>
      </StatusBar>
      <TaskbarPanel />
    </Screen>
  );
}
